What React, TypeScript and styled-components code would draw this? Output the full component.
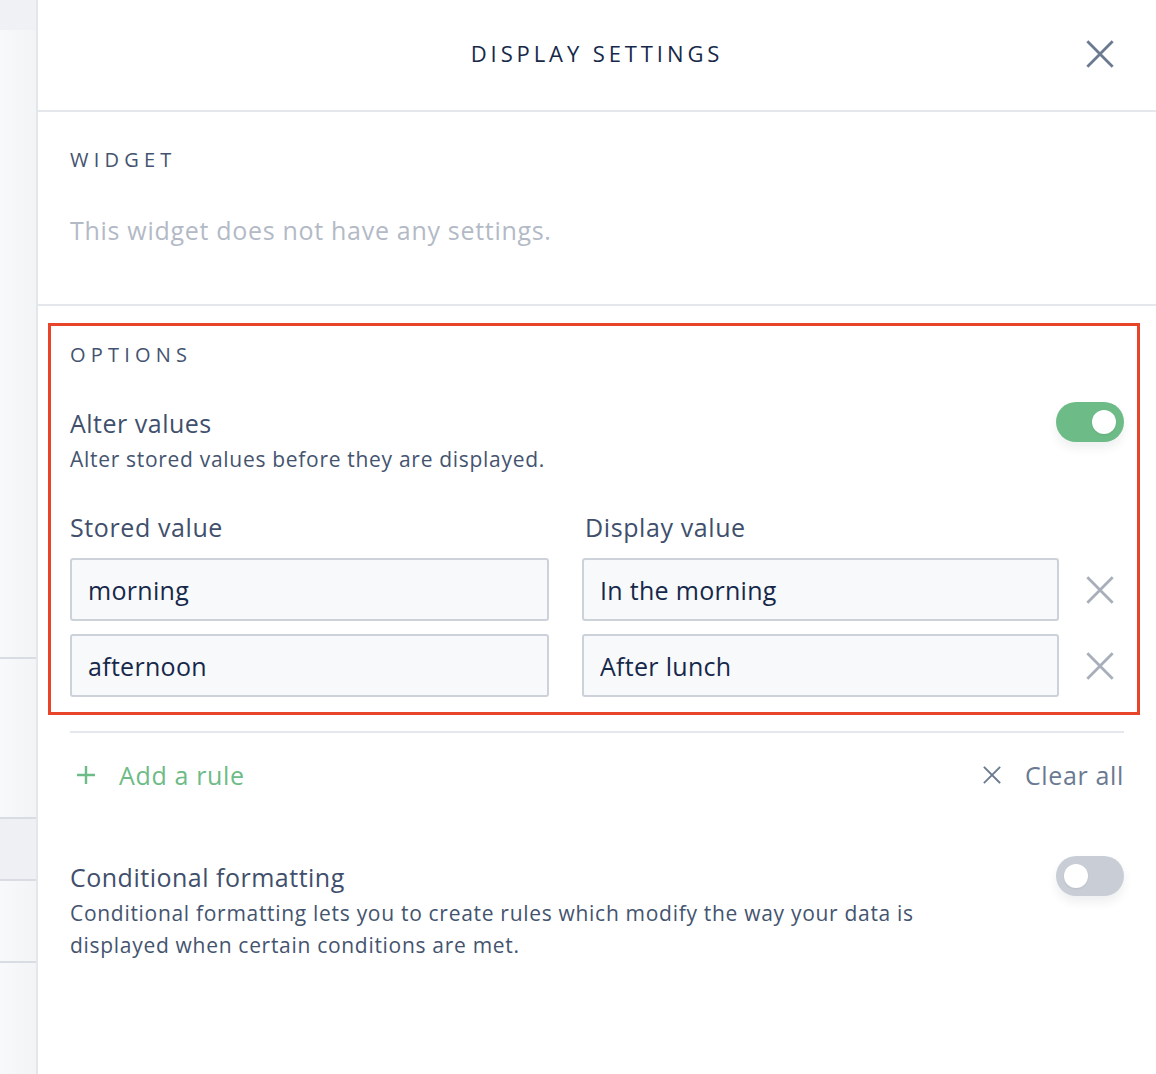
import React from "react";
import styled, { createGlobalStyle } from "styled-components";

const GlobalStyle = createGlobalStyle`
  html, body { margin: 0; padding: 0; background: #ffffff; }
  body { font-family: "Open Sans", "Noto Sans", sans-serif; -webkit-font-smoothing: antialiased; }
  * { box-sizing: border-box; }
`;

const Page = styled.div`
  display: flex;
  width: 1156px;
  height: 1074px;
  overflow: hidden;
`;

const SideStrip = styled.div`
  width: 38px;
  flex: 0 0 38px;
  display: flex;
  flex-direction: column;
  border-right: 2px solid #e3e6eb;
  background: linear-gradient(90deg, #f8f9fa 0%, #f3f4f6 100%);
`;

const StripSegment = styled.div<{ $h: number; $tone?: string; $line?: boolean }>`
  height: ${(p) => p.$h}px;
  flex: 0 0 auto;
  background: ${(p) => p.$tone || "transparent"};
  border-bottom: ${(p) => (p.$line ? "2px solid #d9dde3" : "none")};
`;

const Panel = styled.div`
  flex: 1;
  display: flex;
  flex-direction: column;
  background: #ffffff;
`;

const Header = styled.header`
  height: 112px;
  flex: 0 0 112px;
  display: flex;
  align-items: center;
  justify-content: center;
  position: relative;
  border-bottom: 2px solid #e4e7eb;
`;

const Title = styled.h1`
  margin: 0 0 4px 0;
  font-size: 22px;
  font-weight: 400;
  letter-spacing: 3.9px;
  color: #16284a;
`;

const CloseButton = styled.button`
  position: absolute;
  right: 40px;
  top: 38px;
  width: 32px;
  height: 32px;
  border: 0;
  padding: 0;
  background: transparent;
  display: flex;
  align-items: center;
  justify-content: center;
  cursor: pointer;
`;

const Section = styled.section`
  padding: 36px 32px 59px 32px;
  border-bottom: 2px solid #e4e7eb;
`;

const SectionLabel = styled.div`
  font-size: 20px;
  line-height: 24px;
  letter-spacing: 5.2px;
  color: #44536f;
`;

const MutedText = styled.p`
  margin: 43px 0 0 0;
  font-size: 25px;
  line-height: 30px;
  letter-spacing: 0.7px;
  color: #b3bac6;
`;

const HighlightBox = styled.section`
  margin: 17px 16px 0 10px;
  border: 3px solid #e8442a;
  padding: 17px 13px 15px 19px;
`;

const SettingRow = styled.div<{ $mt: number }>`
  margin-top: ${(p) => p.$mt}px;
  display: flex;
  justify-content: space-between;
  align-items: flex-start;
`;

const SettingText = styled.div`
  display: flex;
  flex-direction: column;
  gap: 5px;
`;

const SettingTitle = styled.div`
  font-size: 25px;
  line-height: 30px;
  letter-spacing: 0.5px;
  color: #3f4f6c;
`;

const SettingDesc = styled.div`
  font-size: 21px;
  line-height: 32px;
  letter-spacing: 0.7px;
  color: #44546f;
  max-width: 880px;
`;

const Toggle = styled.div<{ $on: boolean }>`
  width: 68px;
  height: 40px;
  border-radius: 20px;
  margin-top: -6px;
  flex: 0 0 auto;
  display: flex;
  align-items: center;
  justify-content: ${(p) => (p.$on ? "flex-end" : "flex-start")};
  padding: 0 8px;
  background: ${(p) => (p.$on ? "#6dbb86" : "#c9ced6")};
  box-shadow: 0 6px 10px rgba(40, 50, 70, 0.08);
`;

const Knob = styled.div`
  width: 24px;
  height: 24px;
  border-radius: 50%;
  background: #ffffff;
  box-shadow: 0 1px 2px rgba(0, 0, 0, 0.08);
`;

const RulesGrid = styled.div`
  margin-top: 37px;
  display: grid;
  grid-template-columns: 479px 477px 28px;
  column-gap: 33px;
  row-gap: 13px;
  align-items: center;
`;

const ColumnLabel = styled.div<{ $indent?: number }>`
  font-size: 25px;
  line-height: 30px;
  letter-spacing: 0.6px;
  color: #3f4f6c;
  padding-left: ${(p) => p.$indent || 0}px;
  margin-bottom: 3px;
`;

const ValueInput = styled.input`
  width: 100%;
  height: 63px;
  border: 2px solid #cdd2da;
  border-radius: 3px;
  background: #f8f9fa;
  padding: 0 16px;
  font-family: inherit;
  font-size: 25px;
  letter-spacing: 0.3px;
  color: #16284a;
  outline: none;
`;

const RemoveButton = styled.button`
  width: 28px;
  height: 28px;
  margin-left: -6px;
  border: 0;
  padding: 0;
  background: transparent;
  display: flex;
  align-items: center;
  justify-content: center;
  cursor: pointer;
`;

const Content = styled.div`
  padding: 0 32px;
  display: flex;
  flex-direction: column;
`;

const Divider = styled.hr`
  margin: 16px 0 0 0;
  border: 0;
  height: 2px;
  background: #e4e7eb;
`;

const ActionsRow = styled.div`
  margin-top: 27px;
  display: flex;
  justify-content: space-between;
  align-items: center;
  height: 30px;
`;

const ActionButton = styled.button<{ $tone: string; $gap: number; $indent?: number }>`
  display: flex;
  align-items: center;
  gap: ${(p) => p.$gap}px;
  border: 0;
  padding: 0 0 0 ${(p) => p.$indent || 0}px;
  background: transparent;
  font-family: inherit;
  font-size: 25px;
  line-height: 30px;
  letter-spacing: 0.65px;
  color: ${(p) => p.$tone};
  cursor: pointer;
`;

const CrossIcon = ({ size, color, stroke }: { size: number; color: string; stroke: number }) => (
  <svg width={size} height={size} viewBox="0 0 24 24" fill="none">
    <path d="M2 2 L22 22 M22 2 L2 22" stroke={color} strokeWidth={stroke} strokeLinecap="square" />
  </svg>
);

const PlusIcon = ({ size, color }: { size: number; color: string }) => (
  <svg width={size} height={size} viewBox="0 0 20 20" fill="none">
    <path d="M10 1 V19 M1 10 H19" stroke={color} strokeWidth={2.4} />
  </svg>
);

const rules = [
  { stored: "morning", display: "In the morning" },
  { stored: "afternoon", display: "After lunch" },
];

export default function App() {
  return (
    <>
      <GlobalStyle />
      <Page>
        <SideStrip>
          <StripSegment $h={30} $tone="#eff1f4" />
          <StripSegment $h={629} $line />
          <StripSegment $h={160} $line />
          <StripSegment $h={62} $tone="#eef0f3" $line />
          <StripSegment $h={82} $line />
        </SideStrip>
        <Panel>
          <Header>
            <Title>DISPLAY SETTINGS</Title>
            <CloseButton aria-label="Close">
              <CrossIcon size={28} color="#6b7a91" stroke={2.4} />
            </CloseButton>
          </Header>

          <Section>
            <SectionLabel>WIDGET</SectionLabel>
            <MutedText>This widget does not have any settings.</MutedText>
          </Section>

          <HighlightBox>
            <SectionLabel>OPTIONS</SectionLabel>
            <SettingRow $mt={41}>
              <SettingText>
                <SettingTitle>Alter values</SettingTitle>
                <SettingDesc>Alter stored values before they are displayed.</SettingDesc>
              </SettingText>
              <Toggle $on>
                <Knob />
              </Toggle>
            </SettingRow>
            <RulesGrid>
              <ColumnLabel>Stored value</ColumnLabel>
              <ColumnLabel $indent={3}>Display value</ColumnLabel>
              <span />
              {rules.map((r) => (
                <React.Fragment key={r.stored}>
                  <ValueInput defaultValue={r.stored} />
                  <ValueInput defaultValue={r.display} />
                  <RemoveButton aria-label="Remove rule">
                    <CrossIcon size={28} color="#a8afba" stroke={2.4} />
                  </RemoveButton>
                </React.Fragment>
              ))}
            </RulesGrid>
          </HighlightBox>

          <Content>
            <Divider />
            <ActionsRow>
              <ActionButton $tone="#6dbb86" $gap={23} $indent={6}>
                <PlusIcon size={20} color="#6dbb86" />
                Add a rule
              </ActionButton>
              <ActionButton $tone="#6b7a91" $gap={24}>
                <CrossIcon size={18} color="#6b7a91" stroke={2.4} />
                Clear all
              </ActionButton>
            </ActionsRow>
            <SettingRow $mt={72}>
              <SettingText>
                <SettingTitle>Conditional formatting</SettingTitle>
                <SettingDesc>
                  Conditional formatting lets you to create rules which modify the way your data is displayed when
                  certain conditions are met.
                </SettingDesc>
              </SettingText>
              <Toggle $on={false}>
                <Knob />
              </Toggle>
            </SettingRow>
          </Content>
        </Panel>
      </Page>
    </>
  );
}
